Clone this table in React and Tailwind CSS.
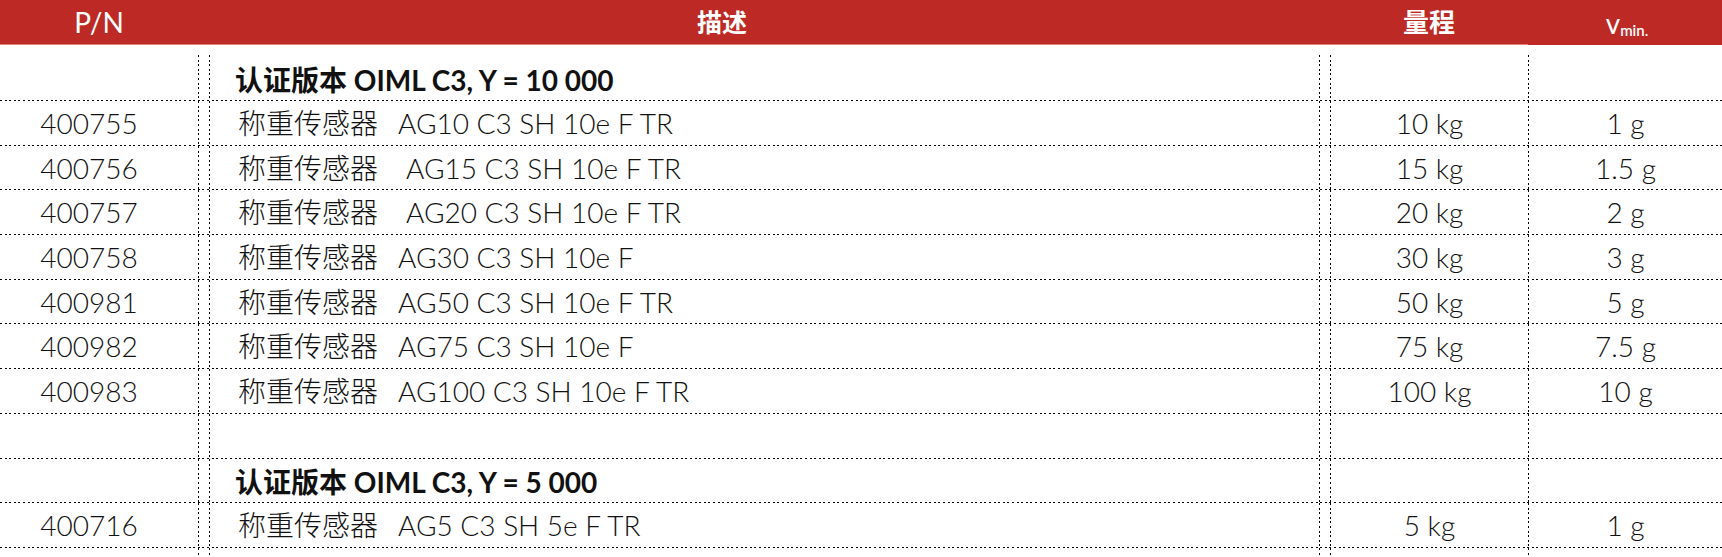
import React from 'react';

const COLS =
  'grid grid-cols-[198px_1px_10px_1px_1109px_1px_10px_1px_197px_1px_1fr]';

const products = [
  { pn: '400755', model: 'AG10 C3 SH 10e F TR', range: '10 kg', vmin: '1 g', gap: 'ml-5' },
  { pn: '400756', model: 'AG15 C3 SH 10e F TR', range: '15 kg', vmin: '1.5 g', gap: 'ml-7' },
  { pn: '400757', model: 'AG20 C3 SH 10e F TR', range: '20 kg', vmin: '2 g', gap: 'ml-7' },
  { pn: '400758', model: 'AG30 C3 SH 10e F', range: '30 kg', vmin: '3 g', gap: 'ml-5' },
  { pn: '400981', model: 'AG50 C3 SH 10e F TR', range: '50 kg', vmin: '5 g', gap: 'ml-5' },
  { pn: '400982', model: 'AG75 C3 SH 10e F', range: '75 kg', vmin: '7.5 g', gap: 'ml-5' },
  { pn: '400983', model: 'AG100 C3 SH 10e F TR', range: '100 kg', vmin: '10 g', gap: 'ml-5' }
];

// dotted rules, drawn as repeating gradients so the dots are spaced like the print
const VLine = () => (
  <div className="bg-[repeating-linear-gradient(to_bottom,#000_0_2px,transparent_2px_4.6px)]" />
);

const HLine = () => (
  <div className="h-px bg-[repeating-linear-gradient(to_right,#000_0_2px,transparent_2px_4.6px)]" />
);

const Row = ({ pn, children, range, vmin, tall }) => (
  <div className={`${COLS} ${tall ? 'h-[45px]' : 'h-[43.7px]'}`}>
    <div className="flex items-center justify-center pr-5">{pn}</div>
    <VLine />
    <div />
    <VLine />
    <div className="flex items-center">{children}</div>
    <VLine />
    <div />
    <VLine />
    <div className="flex items-center justify-center">{range}</div>
    <VLine />
    <div className="flex items-center justify-center">{vmin}</div>
  </div>
);

const Section = ({ title }) => (
  <span className="pl-[25px] pt-1 text-[28px] font-bold text-[#111]">{title}</span>
);

const Product = ({ p }) => (
  <Row pn={p.pn} range={p.range} vmin={p.vmin}>
    <span className="pl-[28px]">
      称重传感器
      <span className={p.gap}>{p.model}</span>
    </span>
  </Row>
);

export default function App() {
  return (
    <div className="w-[1722px] h-[557px] overflow-hidden bg-white font-['Lato','Noto_Sans_CJK_SC',sans-serif] text-[28px] font-light text-[#111] leading-none">
      {/* header bar */}
      <div className="flex h-[45px] bg-[#bd2a26] text-white">
        <div className="grid w-[1528px] grid-cols-[198px_1048px_84px_198px] border-b border-[#e2837d]">
          <div className="flex items-center justify-center text-[28px] font-normal">P/N</div>
          <div className="flex items-center justify-center text-[25px] font-bold">描述</div>
          <div />
          <div className="flex items-center justify-center text-[26px] font-bold">量程</div>
        </div>
        <div className="flex flex-1 items-center justify-center pl-1">
          <span className="text-[28px] font-normal">v</span>
          <span className="relative top-[8px] text-[15px] font-semibold">min.</span>
        </div>
      </div>

      <div className="h-[10px]" />

      <Row tall>
        <Section title="认证版本 OIML C3, Y = 10 000" />
      </Row>
      <HLine />
      {products.map((p) => (
        <React.Fragment key={p.pn}>
          <Product p={p} />
          <HLine />
        </React.Fragment>
      ))}
      <Row />
      <HLine />
      <Row>
        <Section title="认证版本 OIML C3, Y = 5 000" />
      </Row>
      <HLine />
      <Product p={{ pn: '400716', model: 'AG5 C3 SH 5e F TR', range: '5 kg', vmin: '1 g', gap: 'ml-5' }} />
      <HLine />
      <Row />
    </div>
  );
}
